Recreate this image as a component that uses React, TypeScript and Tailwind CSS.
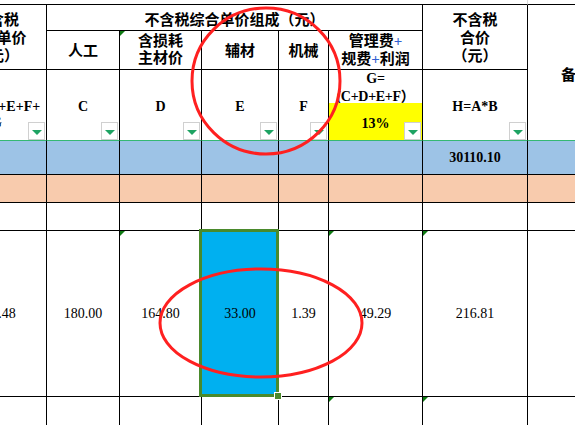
import React from "react";

const FONT = "font-['Liberation_Serif','Noto_Sans_CJK_SC',serif]";

function DropDown() {
  return (
    <div className="absolute right-[1px] bottom-0 w-[17px] h-[18px] border border-[#d0d0d0] bg-white flex items-center justify-center">
      <div className="w-0 h-0 mt-[2px] border-l-[5px] border-r-[5px] border-t-[5px] border-l-transparent border-r-transparent border-t-[#1ea363]" />
    </div>
  );
}

function Mark() {
  return (
    <div className="absolute left-0 top-0 w-0 h-0 border-t-[5px] border-r-[5px] border-t-[#0e7a12] border-r-transparent" />
  );
}

const Plus = () => <span className="text-[#2f5fd0]">+</span>;

export default function App() {
  return (
    <div className={`relative w-[575px] h-[425px] overflow-hidden bg-white text-black ${FONT}`}>
      <div className="ml-[-53px] grid grid-cols-[100px_73px_82px_77px_50px_94px_105px_96px] grid-rows-[5px_26px_39px_71px_34px_28px_28px_166px_40px]">
        {/* top strip */}
        <div className="col-start-1 col-span-7 row-start-1 border-b border-r border-b-black border-r-[#d9d9d9]" />
        <div className="col-start-8 row-start-1 border-b border-black" />

        {/* header block */}
        <div className="col-start-1 row-start-2 row-span-2 border-r border-b border-black flex flex-col items-center pt-[6px] text-[15px] font-bold leading-[18px]">
          <span>不含税</span>
          <span>综合单价</span>
          <span>（元）</span>
        </div>
        <div className="col-start-2 col-span-5 row-start-2 border-r border-b border-black flex items-center justify-center pt-[5px] text-[15px] font-bold">
          不含税综合单价组成（元）
        </div>
        <div className="col-start-7 row-start-2 row-span-2 border-r border-b border-black flex flex-col items-center pt-[6px] text-[15px] font-bold leading-[18px]">
          <span>不含税</span>
          <span>合价</span>
          <span>（元）</span>
        </div>
        <div className="col-start-8 row-start-2 row-span-3 border-b border-b-[#35b873] flex items-center justify-center pt-[5px] text-[15px] font-bold">
          备注
        </div>

        <div className="col-start-2 row-start-3 border-r border-b border-black flex items-center justify-center pt-[2px] text-[15px] font-bold">
          人工
        </div>
        <div className="relative col-start-3 row-start-3 border-r border-b border-black flex flex-col items-center justify-center text-[15px] font-bold leading-[17px]">
          <Mark />
          <span>含损耗</span>
          <span>主材价</span>
        </div>
        <div className="col-start-4 row-start-3 border-r border-b border-black flex items-center justify-center pt-[2px] text-[15px] font-bold">
          辅材
        </div>
        <div className="col-start-5 row-start-3 border-r border-b border-black flex items-center justify-center pt-[2px] text-[15px] font-bold">
          机械
        </div>
        <div className="col-start-6 row-start-3 border-r border-b border-black flex flex-col items-center justify-center text-[15px] font-bold leading-[18px]">
          <span>
            管理费<Plus />
          </span>
          <span>
            规费<Plus />利润
          </span>
        </div>

        {/* letters row */}
        <div className="relative col-start-1 row-start-4 border-r border-b border-r-black border-b-[#35b873] flex flex-col items-center pt-[29px] text-[14px] font-bold leading-[16px]">
          <span>B=C+D+E+F+</span>
          <span>G</span>
          <DropDown />
        </div>
        <div className="relative col-start-2 row-start-4 border-r border-b border-r-black border-b-[#35b873] flex items-center justify-center pt-[3px] text-[14px] font-bold">
          C
          <DropDown />
        </div>
        <div className="relative col-start-3 row-start-4 border-r border-b border-r-black border-b-[#35b873] flex items-center justify-center pt-[3px] text-[14px] font-bold">
          D
          <DropDown />
        </div>
        <div className="relative col-start-4 row-start-4 border-r border-b border-r-black border-b-[#35b873] flex items-center justify-center pt-[3px] text-[14px] font-bold">
          E
          <DropDown />
        </div>
        <div className="relative col-start-5 row-start-4 border-r border-b border-r-black border-b-[#35b873] flex items-center justify-center pt-[3px] text-[14px] font-bold">
          F
          <DropDown />
        </div>
        <div className="relative col-start-6 row-start-4 border-r border-b border-r-black border-b-[#35b873] flex flex-col text-[14px] font-bold">
          <div className="h-[33px] flex flex-col items-center leading-[18px] tracking-[-0.3px]">
            <span>G=</span>
            <span>(C+D+E+F）</span>
          </div>
          <div className="flex-1 bg-[#ffff00] flex items-center justify-center pt-[3px]">13%</div>
          <DropDown />
        </div>
        <div className="relative col-start-7 row-start-4 border-r border-b border-r-black border-b-[#35b873] flex items-center justify-center pt-[3px] text-[14px] font-bold">
          H=A*B
          <DropDown />
        </div>

        {/* blue total row */}
        <div className="col-start-1 row-start-5 border-r border-b border-black bg-[#9dc3e6]" />
        <div className="col-start-2 row-start-5 border-r border-b border-black bg-[#9dc3e6]" />
        <div className="col-start-3 row-start-5 border-r border-b border-black bg-[#9dc3e6]" />
        <div className="col-start-4 row-start-5 border-r border-b border-black bg-[#9dc3e6]" />
        <div className="col-start-5 row-start-5 border-r border-b border-black bg-[#9dc3e6]" />
        <div className="col-start-6 row-start-5 border-r border-b border-black bg-[#9dc3e6]" />
        <div className="col-start-7 row-start-5 border-r border-b border-black bg-[#9dc3e6] flex items-center justify-center text-[14px] font-bold">
          30110.10
        </div>
        <div className="col-start-8 row-start-5 border-r border-b border-black bg-[#9dc3e6]" />

        {/* peach row */}
        <div className="col-start-1 row-start-6 border-r border-b border-black bg-[#f8cbad]" />
        <div className="col-start-2 row-start-6 border-r border-b border-black bg-[#f8cbad]" />
        <div className="col-start-3 row-start-6 border-r border-b border-black bg-[#f8cbad]" />
        <div className="col-start-4 row-start-6 border-r border-b border-black bg-[#f8cbad]" />
        <div className="col-start-5 row-start-6 border-r border-b border-black bg-[#f8cbad]" />
        <div className="col-start-6 row-start-6 border-r border-b border-black bg-[#f8cbad]" />
        <div className="col-start-7 row-start-6 border-r border-b border-black bg-[#f8cbad]" />
        <div className="col-start-8 row-start-6 border-r border-b border-black bg-[#f8cbad]" />

        {/* empty row */}
        <div className="col-start-1 row-start-7 border-r border-b border-black" />
        <div className="col-start-2 row-start-7 border-r border-b border-black" />
        <div className="col-start-3 row-start-7 border-r border-b border-black" />
        <div className="col-start-4 row-start-7 border-r border-b border-black" />
        <div className="col-start-5 row-start-7 border-r border-b border-black" />
        <div className="col-start-6 row-start-7 border-r border-b border-black" />
        <div className="col-start-7 row-start-7 border-r border-b border-black" />
        <div className="col-start-8 row-start-7 border-r border-b border-black" />

        {/* values row */}
        <div className="col-start-1 row-start-8 border-r border-b border-black flex items-center justify-center text-[14px]">428.48</div>
        <div className="col-start-2 row-start-8 border-r border-b border-black flex items-center justify-center text-[14px]">180.00</div>
        <div className="relative col-start-3 row-start-8 border-r border-b border-black flex items-center justify-center text-[14px]">
          <Mark />
          164.80
        </div>
        <div className="relative col-start-4 row-start-8 border-r border-b border-black bg-[#00b0f0] flex items-center justify-center text-[14px]">
          33.00
          <div className="absolute left-[-3px] right-[-1px] top-[-2px] bottom-[-1px] border-[3px] border-[#4a8a2c]" />
          <div className="absolute right-[-3px] bottom-[-3px] w-[6px] h-[6px] bg-[#4a8a2c] outline outline-1 outline-white" />
        </div>
        <div className="col-start-5 row-start-8 border-r border-b border-black flex items-center justify-center text-[14px]">1.39</div>
        <div className="relative col-start-6 row-start-8 border-r border-b border-black flex items-center justify-center text-[14px]">
          <Mark />
          49.29
        </div>
        <div className="relative col-start-7 row-start-8 border-r border-b border-black flex items-center justify-center text-[14px]">
          <Mark />
          216.81
        </div>
        <div className="col-start-8 row-start-8 border-r border-b border-black" />

        {/* last row */}
        <div className="col-start-1 row-start-9 border-r border-black" />
        <div className="col-start-2 row-start-9 border-r border-black" />
        <div className="col-start-3 row-start-9 border-r border-black" />
        <div className="col-start-4 row-start-9 border-r border-black" />
        <div className="col-start-5 row-start-9 border-r border-black" />
        <div className="relative col-start-6 row-start-9 border-r border-black">
          <Mark />
        </div>
        <div className="relative col-start-7 row-start-9 border-r border-black">
          <Mark />
        </div>
        <div className="col-start-8 row-start-9 border-r border-black" />
      </div>

      {/* red annotation circles */}
      <svg className="absolute inset-0 pointer-events-none" width="575" height="425" viewBox="0 0 575 425">
        <ellipse cx="266" cy="81" rx="74" ry="73" fill="none" stroke="#ff2020" strokeWidth="3" />
        <ellipse cx="261" cy="323" rx="101" ry="54" fill="none" stroke="#ff2020" strokeWidth="3" />
      </svg>
    </div>
  );
}
